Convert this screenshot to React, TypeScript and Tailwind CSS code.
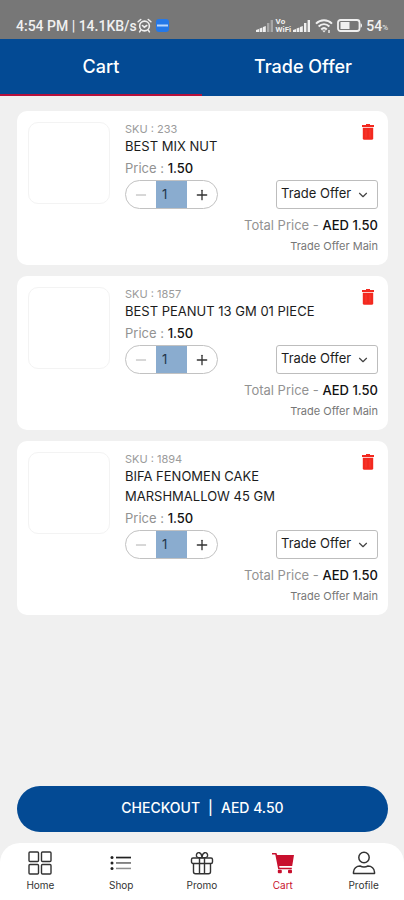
import React, { useState } from 'react';
import { ChevronDown, Minus, Plus } from 'lucide-react';

interface CartItem {
  sku: string;
  name: string;
  price: number;
}

const ITEMS: CartItem[] = [
  { sku: '233', name: 'BEST MIX NUT', price: 1.5 },
  { sku: '1857', name: 'BEST PEANUT 13 GM 01 PIECE', price: 1.5 },
  { sku: '1894', name: 'BIFA FENOMEN CAKE MARSHMALLOW 45 GM', price: 1.5 },
];

function SignalIcon({ weak = false }: { weak?: boolean }) {
  return (
    <svg viewBox="0 0 18 12" className="w-[18px] h-3" fill="currentColor">
      <path d="M0 12v-2l3-1v3zM3.6 12V8.500l2.800-1v4.500zM7 12V7l2.800-1v6z" />
      <rect x="11" y="3" width="2.4" height="9" opacity={weak ? 0.4 : 1} />
      <rect x="14.600" y="0" width="2.4" height="12" opacity={weak ? 0.4 : 1} />
    </svg>
  );
}

function StatusBar() {
  return (
    <div className="h-[39px] shrink-0 bg-[#777777] text-[#f0f0f0] flex items-center justify-between px-4 pt-3 font-[Roboto,sans-serif]">
      <div className="flex items-center">
        <span className="text-[14px] leading-4 font-medium whitespace-nowrap">4:54 PM | 14.1KB/s</span>
        <svg viewBox="0 0 16 16" className="w-[15px] h-[15px]" fill="none" stroke="currentColor" strokeWidth="1.7" strokeLinecap="round">
          <circle cx="8" cy="8.500" r="5.200" />
          <path d="M1.200 4 4 1.600M14.800 4 12 1.600M3.800 13.200 2.800 14.800M12.200 13.200l1 1.600M5.800 8l2 1.800L10.400 8" />
        </svg>
        <svg viewBox="0 0 13 13" className="w-[13px] h-[13px] ml-1">
          <rect width="13" height="13" rx="3" fill="#2478e8" />
          <rect x="1" y="5.500" width="11" height="2" fill="#b9d6fb" />
        </svg>
      </div>
      <div className="flex items-center">
        <SignalIcon weak />
        <span className="mx-[2px] text-[8px] leading-[8px] font-bold">
          Vo
          <br />
          WiFi
        </span>
        <SignalIcon />
        <svg viewBox="0 0 18 14" className="w-[18px] h-[14px] ml-1" fill="none" stroke="currentColor" strokeWidth="2">
          <path d="M1 4.600C5.500.2 12.500.2 17 4.600M3.600 7.600c3.200-3 7.600-3 10.800 0M6.200 10.400c1.700-1.500 3.900-1.500 5.600 0" />
          <path d="M7.200 11.400h3.600L9 13.600z" fill="currentColor" stroke="none" />
          <path d="M14 11v3" strokeWidth="1.400" />
        </svg>
        <svg viewBox="0 0 26 13" className="w-[26px] h-[13px] ml-1">
          <rect x="1" y="1" width="21.500" height="11" rx="2.500" fill="none" stroke="currentColor" strokeWidth="1.800" />
          <rect x="3.500" y="3" width="9" height="7" fill="currentColor" />
          <path d="M23.500 4.200c2 .3 2 4.300 0 4.600z" fill="currentColor" />
        </svg>
        <span className="ml-[3px] text-[14px] leading-4 font-medium">54</span>
        <span className="self-end text-[8px] leading-[12px]">%</span>
      </div>
    </div>
  );
}

function TrashIcon() {
  return (
    <svg viewBox="0 0 12 16" className="w-3 h-4" fill="#f3291f">
      <path d="M4 0h4v1h4v2H0V1h4z" />
      <path d="M.8 3.800h10.400v10.400A1.600 1.600 0 0 1 9.600 15.800H2.400A1.600 1.600 0 0 1 .8 14.200z" />
      <path d="M4 5.500v8M8 5.500v8" stroke="#f75045" strokeWidth=".5" />
    </svg>
  );
}

function CartCard({ item }: { item: CartItem }) {
  const [qty, setQty] = useState(1);

  return (
    <li className="bg-white rounded-[10px] flex gap-[15px] pl-[11px] pr-[10px] pt-[11px] pb-3">
      <div className="w-[82px] h-[82px] shrink-0 rounded-[10px] border border-[#f3f3f3]" />
      <div className="flex-1 min-w-0 flex flex-col">
        <div className="flex items-start justify-between">
          <div className="pt-px">
            <p className="text-[11px] leading-[13px] text-[#9b9b9b]">SKU : {item.sku}</p>
            <h2 className="text-[13px] leading-5 text-[#1c1c1c] max-w-[210px]">{item.name}</h2>
          </div>
          <button aria-label={`Remove ${item.name}`} className="pt-[2px] pr-1">
            <TrashIcon />
          </button>
        </div>
        <p className="mt-[2px] text-[13px] leading-5 text-[#929292]">
          Price : <span className="font-medium text-[#111111]">{item.price.toFixed(2)}</span>
        </p>
        <div className="mt-[2px] flex items-center justify-between">
          <div className="w-[93px] h-[29px] flex rounded-full border border-[#c2c2c2] overflow-hidden">
            <button
              aria-label="Decrease quantity"
              onClick={() => setQty(Math.max(1, qty - 1))}
              className="w-[30px] flex items-center justify-center text-[#b0b0b0]"
            >
              <Minus className="w-4 h-4" strokeWidth={1.5} />
            </button>
            <input
              aria-label="Quantity"
              value={qty}
              onChange={(e) => setQty(Number(e.target.value) || 1)}
              className="w-[31px] pl-[6px] bg-[#8aaccf] text-[13px] text-[#24364a] outline-none"
            />
            <button
              aria-label="Increase quantity"
              onClick={() => setQty(qty + 1)}
              className="w-[30px] flex items-center justify-center text-[#333333]"
            >
              <Plus className="w-4 h-4" strokeWidth={2} />
            </button>
          </div>
          <div className="relative">
            <select
              aria-label="Offer type"
              className="block appearance-none w-[102px] h-[29px] pl-1 pb-px rounded-[3px] border border-[#bdbdbd] bg-white text-[13px] text-[#1c1c1c]"
            >
              <option>Trade Offer</option>
            </select>
            <ChevronDown className="absolute right-2 top-2 w-[14px] h-[14px] text-[#444444] pointer-events-none" strokeWidth={2} />
          </div>
        </div>
        <p className="mt-[6px] text-right text-[13px] leading-5 text-[#929292]">
          Total Price - <span className="font-medium text-[#111111]">AED {(item.price * qty).toFixed(2)}</span>
        </p>
        <p className="mt-1 text-right text-[11px] leading-[14px] text-[#777777]">Trade Offer Main</p>
      </div>
    </li>
  );
}

function HomeIcon() {
  return (
    <svg viewBox="0 0 24 24" className="w-6 h-6" fill="none" stroke="#333333" strokeWidth="1.400">
      <rect x="1" y="1" width="9.500" height="9.500" rx="1" />
      <rect x="13.500" y="1" width="9.500" height="9.500" rx="1" />
      <rect x="1" y="13.500" width="9.500" height="9.500" rx="1" />
      <rect x="13.500" y="13.500" width="9.500" height="9.500" rx="1" />
    </svg>
  );
}

function ShopIcon() {
  return (
    <svg viewBox="0 0 24 24" className="w-6 h-6" fill="#222222">
      <circle cx="3" cy="6.500" r="1.500" />
      <circle cx="3" cy="12" r="1.500" />
      <circle cx="3" cy="17.500" r="1.500" />
      <rect x="7" y="5.700" width="15" height="1.700" />
      <rect x="7" y="11.200" width="15" height="1.500" opacity=".7" />
      <rect x="7" y="16.700" width="15" height="1.500" opacity=".5" />
    </svg>
  );
}

function PromoIcon() {
  return (
    <svg viewBox="0 0 24 24" className="w-6 h-6" fill="none" stroke="#333333" strokeWidth="1.400" strokeLinejoin="round">
      <rect x="1.500" y="7" width="21" height="5.500" rx="1.500" />
      <path d="M3.500 12.500v8.300a2 2 0 0 0 2 2h13a2 2 0 0 0 2-2v-8.300M9.500 7v15.800M14.500 7v15.800" />
      <path d="M12 6.500C6.500 7 6 5.500 6.500 3.500 7.500.5 11.500.8 12 6.500ZM12 6.500c5.500.5 6-1 5.500-3C16.500.5 12.500.8 12 6.500Z" />
    </svg>
  );
}

function CartIcon() {
  return (
    <svg viewBox="0 0 24 24" className="w-6 h-6" fill="#c8102e">
      <path d="M1 2h4.400l.8 2H23l-1.800 11H8.200l.3 1.700h12.300v1.500H7.200L4.300 3.500H1z" />
      <rect x="6.800" y="18.800" width="4" height="3.400" rx="1" />
      <rect x="17" y="18.800" width="4" height="3.400" rx="1" />
    </svg>
  );
}

function ProfileIcon() {
  return (
    <svg viewBox="0 0 24 24" className="w-6 h-6" fill="none" stroke="#333333" strokeWidth="1.500" strokeLinejoin="round">
      <circle cx="12" cy="6.500" r="5.200" />
      <path d="M1.500 22.500v-1.500c0-3.500 3-6 6.500-6 2.500 1.200 5.500 1.200 8 0 3.500 0 6.500 2.500 6.500 6v1.500z" />
    </svg>
  );
}

const NAV = [
  { label: 'Home', Icon: HomeIcon },
  { label: 'Shop', Icon: ShopIcon },
  { label: 'Promo', Icon: PromoIcon },
  { label: 'Cart', Icon: CartIcon, active: true },
  { label: 'Profile', Icon: ProfileIcon },
];

export default function App() {
  return (
    <div className="min-h-screen flex flex-col bg-[#f0f0f0] font-[Inter,sans-serif]">
      <StatusBar />
      <div className="grid grid-cols-2 h-[57px] shrink-0 bg-[#034a94] text-white text-[18px] font-medium">
        <button className="border-b-2 border-[#b5103c]">Cart</button>
        <button className="border-b-2 border-[#034a94]">Trade Offer</button>
      </div>

      <main className="flex-1 flex flex-col pl-[17px] pr-4 pt-[15px] pb-[11px]">
        <ul className="flex flex-col gap-[11px]">
          {ITEMS.map((item) => (
            <CartCard key={item.sku} item={item} />
          ))}
        </ul>
        <button className="mt-auto h-[46px] rounded-full bg-[#034a94] text-white text-[14px] font-medium flex items-center justify-center gap-2 pb-[3px]">
          <span>CHECKOUT</span>
          <span>|</span>
          <span>AED 4.50</span>
        </button>
      </main>

      <nav className="grid grid-cols-5 h-[57px] shrink-0 bg-white rounded-t-[20px] pt-2">
        {NAV.map(({ label, Icon, active }) => (
          <a
            key={label}
            href="#"
            className={`flex flex-col items-center gap-1 text-[10px] leading-3 ${active ? 'text-[#c8102e]' : 'text-[#333333]'}`}
          >
            <Icon />
            {label}
          </a>
        ))}
      </nav>
    </div>
  );
}
